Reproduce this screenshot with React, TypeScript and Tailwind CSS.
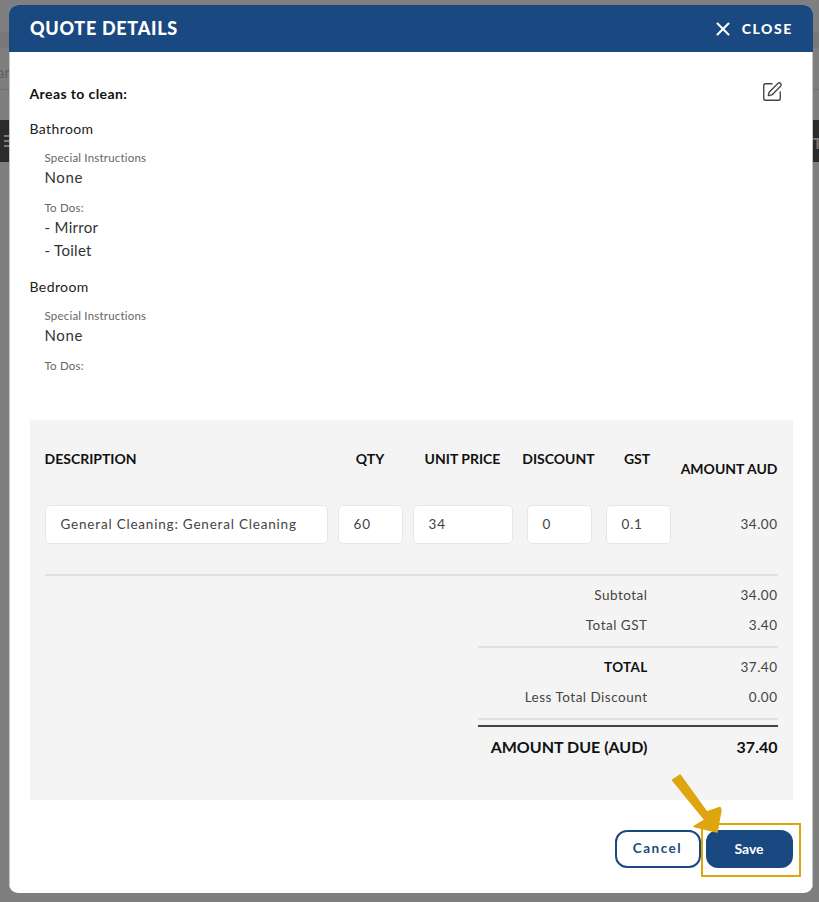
import { SquarePen, X } from 'lucide-react';

function Area({ name, todos }: { name: string; todos: string[] }) {
    return (
        <div className="mb-[15px]">
            <p className="text-[14px] leading-[20px] tracking-[0.4px] text-[#222]">{name}</p>
            <div className="mt-[11px] pl-[15px]">
                <p className="text-[11.5px] leading-[16px] tracking-[0.2px] text-[#666]">Special Instructions</p>
                <p className="text-[15px] leading-[23px] tracking-[0.6px] text-[#333]">None</p>
                <p className="mt-[11px] text-[11.5px] leading-[16px] tracking-[0.2px] text-[#666]">To Dos:</p>
                <div>
                    {todos.map((todo) => (
                        <p key={todo} className="text-[15px] leading-[23px] tracking-[0.3px] text-[#333]">- {todo}</p>
                    ))}
                </div>
            </div>
        </div>
    );
}

function Field({ value, width }: { value: string; width: string }) {
    return (
        <div className={`flex h-[39px] items-center rounded-[5px] border border-[#e6e6e6] bg-white pl-[15px] text-[13.5px] tracking-[0.8px] text-[#444] ${width}`}>
            {value}
        </div>
    );
}

function TotalRow({ label, value, bold }: { label: string; value: string; bold?: boolean }) {
    return (
        <div className="flex h-[30px] items-center justify-end text-[13.5px] tracking-[0.5px] text-[#444]">
            <span className={bold ? 'font-bold tracking-[0.3px] text-[#111]' : ''}>{label}</span>
            <span className="w-[130px] text-right">{value}</span>
        </div>
    );
}

export default function App() {
    return (
        <div className="relative h-[902px] w-[819px] overflow-hidden bg-[#7f7f7f] font-['Lato',sans-serif]">
            {/* page behind the overlay */}
            <div className="absolute left-0 top-[32px] h-[15px] w-full bg-[#787878]" />
            <div className="absolute left-0 top-[47px] h-px w-full bg-[#757575]" />
            <span className="absolute left-[-3px] top-[61px] text-[15px] text-[#5f5f5f]">ar</span>
            <div className="absolute left-0 top-[89px] h-px w-full bg-[#707070]" />
            <div className="absolute left-0 top-[120px] h-[42px] w-full bg-[#2b2b2b]" />
            <div className="absolute left-[4px] top-[135px] flex w-[6px] flex-col gap-[3px]">
                <div className="h-[2px] bg-[#7c7c7c]" />
                <div className="h-[2px] bg-[#7c7c7c]" />
                <div className="h-[2px] bg-[#7c7c7c]" />
            </div>
            <span className="absolute left-[813px] top-[132px] text-[15px] font-bold text-[#7c7c7c]">T</span>

            <div className="absolute left-[9px] top-[5px] flex h-[888px] w-[804px] flex-col overflow-hidden rounded-[9px] bg-white">
                <div className="flex h-[47px] shrink-0 items-center justify-between bg-[#1a4880] pl-[21px] pr-[20px] text-white">
                    <span className="text-[18px] font-black tracking-[0.7px]">QUOTE DETAILS</span>
                    <span className="flex items-center gap-[8px] text-[14px] font-black tracking-[1.6px]">
                        <X size={22} strokeWidth={2.25} />
                        CLOSE
                    </span>
                </div>

                <div className="flex flex-1 flex-col border-x border-[#c4c4c4] pl-[19.5px] pr-[19.5px]">
                    <div className="relative mt-[32px]">
                        <p className="text-[14px] font-bold leading-[20px] tracking-[0.4px] text-[#111]">Areas to clean:</p>
                        <SquarePen className="absolute right-[10px] top-[-3px] text-[#444]" size={22} strokeWidth={1.5} />
                    </div>
                    <div className="mt-[15px]">
                        <Area name="Bathroom" todos={['Mirror', 'Toilet']} />
                        <Area name="Bedroom" todos={[]} />
                    </div>

                    <div className="mt-[31px] h-[380px] bg-[#f4f4f4] px-[15px]">
                        <div className="flex whitespace-nowrap pt-[30px] text-[14px] font-bold leading-[18px] text-[#111]">
                            <span className="w-[293px]">DESCRIPTION</span>
                            <span className="w-[65px] text-center">QTY</span>
                            <span className="ml-[10px] w-[100px] text-center">UNIT PRICE</span>
                            <span className="w-[92px] text-center">DISCOUNT</span>
                            <span className="w-[65px] text-center">GST</span>
                            <span className="mt-[10px] flex-1 text-right">AMOUNT AUD</span>
                        </div>
                        <div className="mt-[27px] flex items-center gap-[10px]">
                            <Field value="General Cleaning: General Cleaning" width="w-[283px]" />
                            <Field value="60" width="w-[65px]" />
                            <Field value="34" width="w-[100px]" />
                            <Field value="0" width="ml-[4px] w-[65px]" />
                            <Field value="0.1" width="ml-[4px] w-[65px]" />
                            <span className="flex-1 text-right text-[13.5px] tracking-[0.5px] text-[#444]">34.00</span>
                        </div>
                        <div className="mt-[30px] h-[2px] bg-[#e1e1e1]" />
                        <div className="ml-auto w-[300px]">
                            <div className="mt-[4px]">
                                <TotalRow label="Subtotal" value="34.00" />
                                <TotalRow label="Total GST" value="3.40" />
                            </div>
                            <div className="mt-[6px] h-[2px] bg-[#e1e1e1]" />
                            <div className="mt-[4px]">
                                <TotalRow label="TOTAL" value="37.40" bold />
                                <TotalRow label="Less Total Discount" value="0.00" />
                            </div>
                            <div className="mt-[6px] h-[2px] bg-[#e1e1e1]" />
                            <div className="mt-[5px] h-[2px] bg-[#444]" />
                            <div className="mt-[3px] flex h-[34px] items-center justify-end whitespace-nowrap text-[16px] font-bold text-[#111]">
                                <span>AMOUNT DUE (AUD)</span>
                                <span className="w-[130px] text-right">37.40</span>
                            </div>
                        </div>
                    </div>

                    <div className="mt-[30px] flex justify-end gap-[5px]">
                        <button className="h-[38px] w-[86px] rounded-[12px] border-2 border-[#1a4880] bg-white pb-[2px] text-[13.5px] font-bold tracking-[1.5px] text-[#1a4880]">Cancel</button>
                        <button className="relative h-[38px] w-[87px] rounded-[12px] bg-[#1a4880] pb-[2px] text-[14px] font-bold text-white">
                            Save
                            <span className="absolute left-[-5px] top-[-7px] h-[54px] w-[100px] border-2 border-[#dea50f]" />
                        </button>
                    </div>
                </div>
            </div>

            {/* callout arrow */}
            <svg className="absolute left-[665px] top-[770px]" width="70" height="70" viewBox="0 0 70 70">
                <path d="M7.5 10 L15 5 L41.7 42 L55 37.5 L56 40 L52 62 L29 56.5 L40 50 Z" fill="#dea50f" stroke="#dea50f" strokeWidth="1.5" strokeLinejoin="round" />
            </svg>
        </div>
    );
}
